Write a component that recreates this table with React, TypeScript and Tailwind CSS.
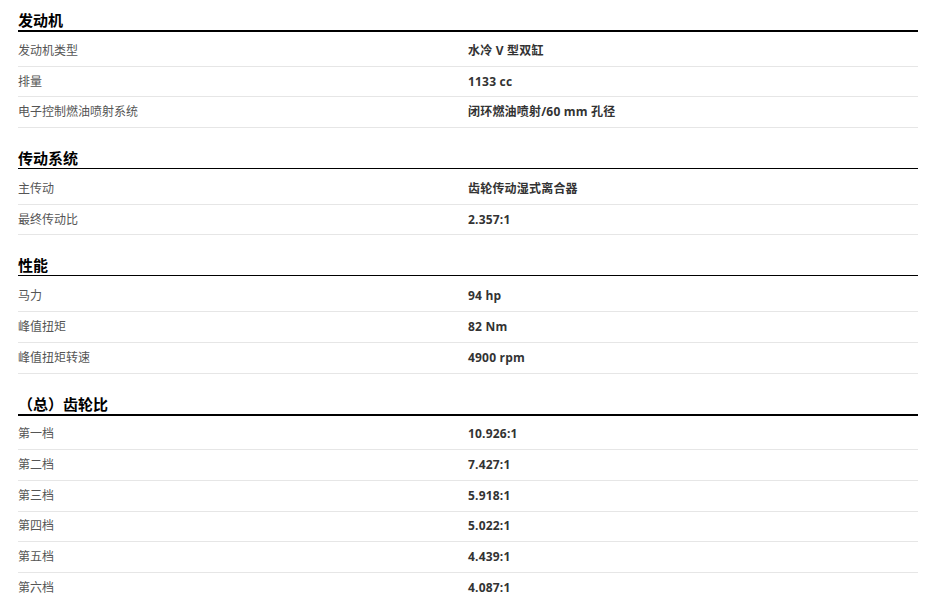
import React from "react";

type Section = { title: string; line: string; rows: [string, string][] };

const sections: Section[] = [
  {
    title: "发动机",
    line: "border-b-2 h-[22px]",
    rows: [
      ["发动机类型", "水冷 V 型双缸"],
      ["排量", "1133 cc"],
      ["电子控制燃油喷射系统", "闭环燃油喷射/60 mm 孔径"],
    ],
  },
  {
    title: "传动系统",
    line: "border-b h-[21px] mb-[5px]",
    rows: [
      ["主传动", "齿轮传动湿式离合器"],
      ["最终传动比", "2.357:1"],
    ],
  },
  {
    title: "性能",
    line: "border-b h-[21px] mb-[5px]",
    rows: [
      ["马力", "94 hp"],
      ["峰值扭矩", "82 Nm"],
      ["峰值扭矩转速", "4900 rpm"],
    ],
  },
  {
    title: "（总）齿轮比",
    line: "border-b-2 h-[22px]",
    rows: [
      ["第一档", "10.926:1"],
      ["第二档", "7.427:1"],
      ["第三档", "5.918:1"],
      ["第四档", "5.022:1"],
      ["第五档", "4.439:1"],
      ["第六档", "4.087:1"],
    ],
  },
];

export default function App() {
  return (
    <div
      className="w-[935px] h-[601px] overflow-hidden bg-white pl-[18px] pr-[17px] pt-[10px]"
      style={{ fontFamily: '"Open Sans", "Noto Sans CJK SC", sans-serif' }}
    >
      {sections.map((s, i) => (
        <section key={i} className={i === 0 ? "" : "mt-[20px]"}>
          <h2
            className={`leading-[20px] text-[15px] font-bold text-black border-black mb-[4px] ${s.line}`}
          >
            {s.title}
          </h2>
          <div>
            {s.rows.map(([k, v], j) => (
              <div
                key={j}
                className="grid grid-cols-2 h-[30.7px] items-center border-b border-[#e6e6e6] text-[12px]"
              >
                <div className="text-[#555555]">{k}</div>
                <div className="font-bold text-[#333333] tracking-[0.2px]">{v}</div>
              </div>
            ))}
          </div>
        </section>
      ))}
    </div>
  );
}
